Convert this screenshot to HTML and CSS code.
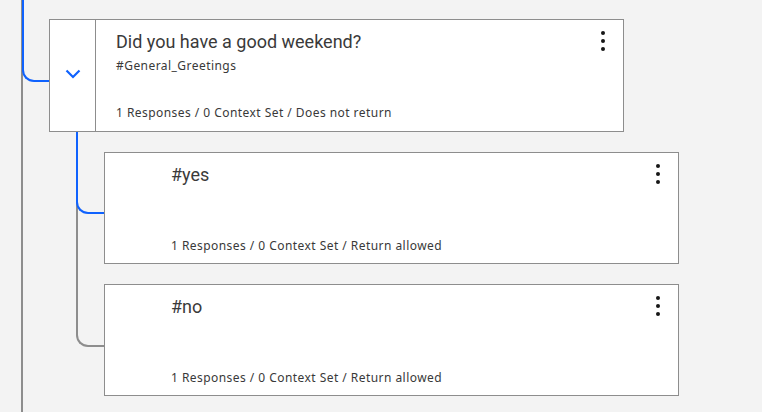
FILE: index.html
```html
<!DOCTYPE html>
<html lang="en">
<head>
<meta charset="utf-8">
<title>Dialog tree</title>
<link rel="stylesheet" href="styles.css">
</head>
<body>
<div class="tree">
  <div class="spine"></div>
  <div class="link link-no gray"></div>
  <div class="link link-yes"></div>
  <div class="link link-top"></div>

  <div class="node parent">
    <div class="toggle">
      <svg width="16" height="16" viewBox="0 0 16 16" aria-hidden="true"><polyline points="1.5,4.5 8,11 14.5,4.5" fill="none" stroke="#0f62fe" stroke-width="2.2"/></svg>
    </div>
    <div class="body">
      <div class="title">Did you have a good weekend?</div>
      <div class="condition">#General_Greetings</div>
      <div class="meta">1 Responses / 0 Context Set / Does not return</div>
    </div>
    <button class="kebab" aria-label="Options"><span></span><span></span><span></span></button>
  </div>

  <div class="children">
    <div class="node child">
      <div class="spacer"></div>
      <div class="body">
        <div class="title">#yes</div>
        <div class="meta">1 Responses / 0 Context Set / Return allowed</div>
      </div>
      <button class="kebab" aria-label="Options"><span></span><span></span><span></span></button>
    </div>
    <div class="node child">
      <div class="spacer"></div>
      <div class="body">
        <div class="title">#no</div>
        <div class="meta">1 Responses / 0 Context Set / Return allowed</div>
      </div>
      <button class="kebab" aria-label="Options"><span></span><span></span><span></span></button>
    </div>
  </div>
</div>
</body>
</html>
```
FILE: styles.css
```css
html, body {
  margin: 0;
  padding: 0;
  background: #f3f3f3;
  height: 412px;
  overflow: hidden;
  font-family: "Noto Sans", "Open Sans", sans-serif;
  color: #393939;
}
.tree {
  position: relative;
  padding: 19px 0 0 49px;
  height: 393px;
}
.spine {
  position: absolute;
  left: 21px;
  top: 0;
  width: 2px;
  height: 412px;
  background: #8d8d8d;
}
.link {
  position: absolute;
  box-sizing: border-box;
  border-left: 2px solid #0f62fe;
  border-bottom: 2px solid #0f62fe;
  border-bottom-left-radius: 12px;
}
.link.gray {
  border-color: #8d8d8d;
}
.link-top {
  left: 22px;
  top: 0;
  width: 28px;
  height: 82px;
}
.link-yes {
  left: 76px;
  top: 132px;
  width: 29px;
  height: 82px;
}
.link-no {
  left: 76px;
  top: 132px;
  width: 29px;
  height: 215px;
}
.node {
  position: relative;
  box-sizing: border-box;
  width: 575px;
  background: #fff;
  border: 1px solid #8d8d8d;
  display: flex;
}
.parent {
  height: 113px;
}
.toggle {
  width: 45px;
  border-right: 1px solid #8d8d8d;
  display: flex;
  align-items: center;
  justify-content: center;
  padding-bottom: 3px;
}
.toggle svg {
  display: block;
}
.spacer {
  width: 47px;
}
.body {
  flex: 1;
  display: flex;
  flex-direction: column;
  padding: 9px 20px 10px 20px;
}
.child .body {
  padding-left: 19px;
  padding-bottom: 9px;
}
.title {
  font-family: Roboto, "Noto Sans", sans-serif;
  font-size: 18px;
  line-height: 26px;
  color: #3a3a3a;
}
.condition {
  margin-top: 3px;
  font-size: 12px;
  line-height: 16px;
  letter-spacing: 0.45px;
}
.meta {
  margin-top: auto;
  font-size: 12px;
  line-height: 16px;
  letter-spacing: 0.45px;
}
.children {
  margin: 20px 0 0 55px;
  display: flex;
  flex-direction: column;
  gap: 20px;
}
.child {
  height: 112px;
}
.kebab {
  position: absolute;
  right: 12px;
  top: 8px;
  width: 16px;
  height: 26px;
  padding: 0;
  border: 0;
  background: none;
  display: flex;
  flex-direction: column;
  align-items: center;
  justify-content: center;
  gap: 4px;
}
.kebab span {
  width: 4px;
  height: 4px;
  border-radius: 50%;
  background: #161616;
}
```
